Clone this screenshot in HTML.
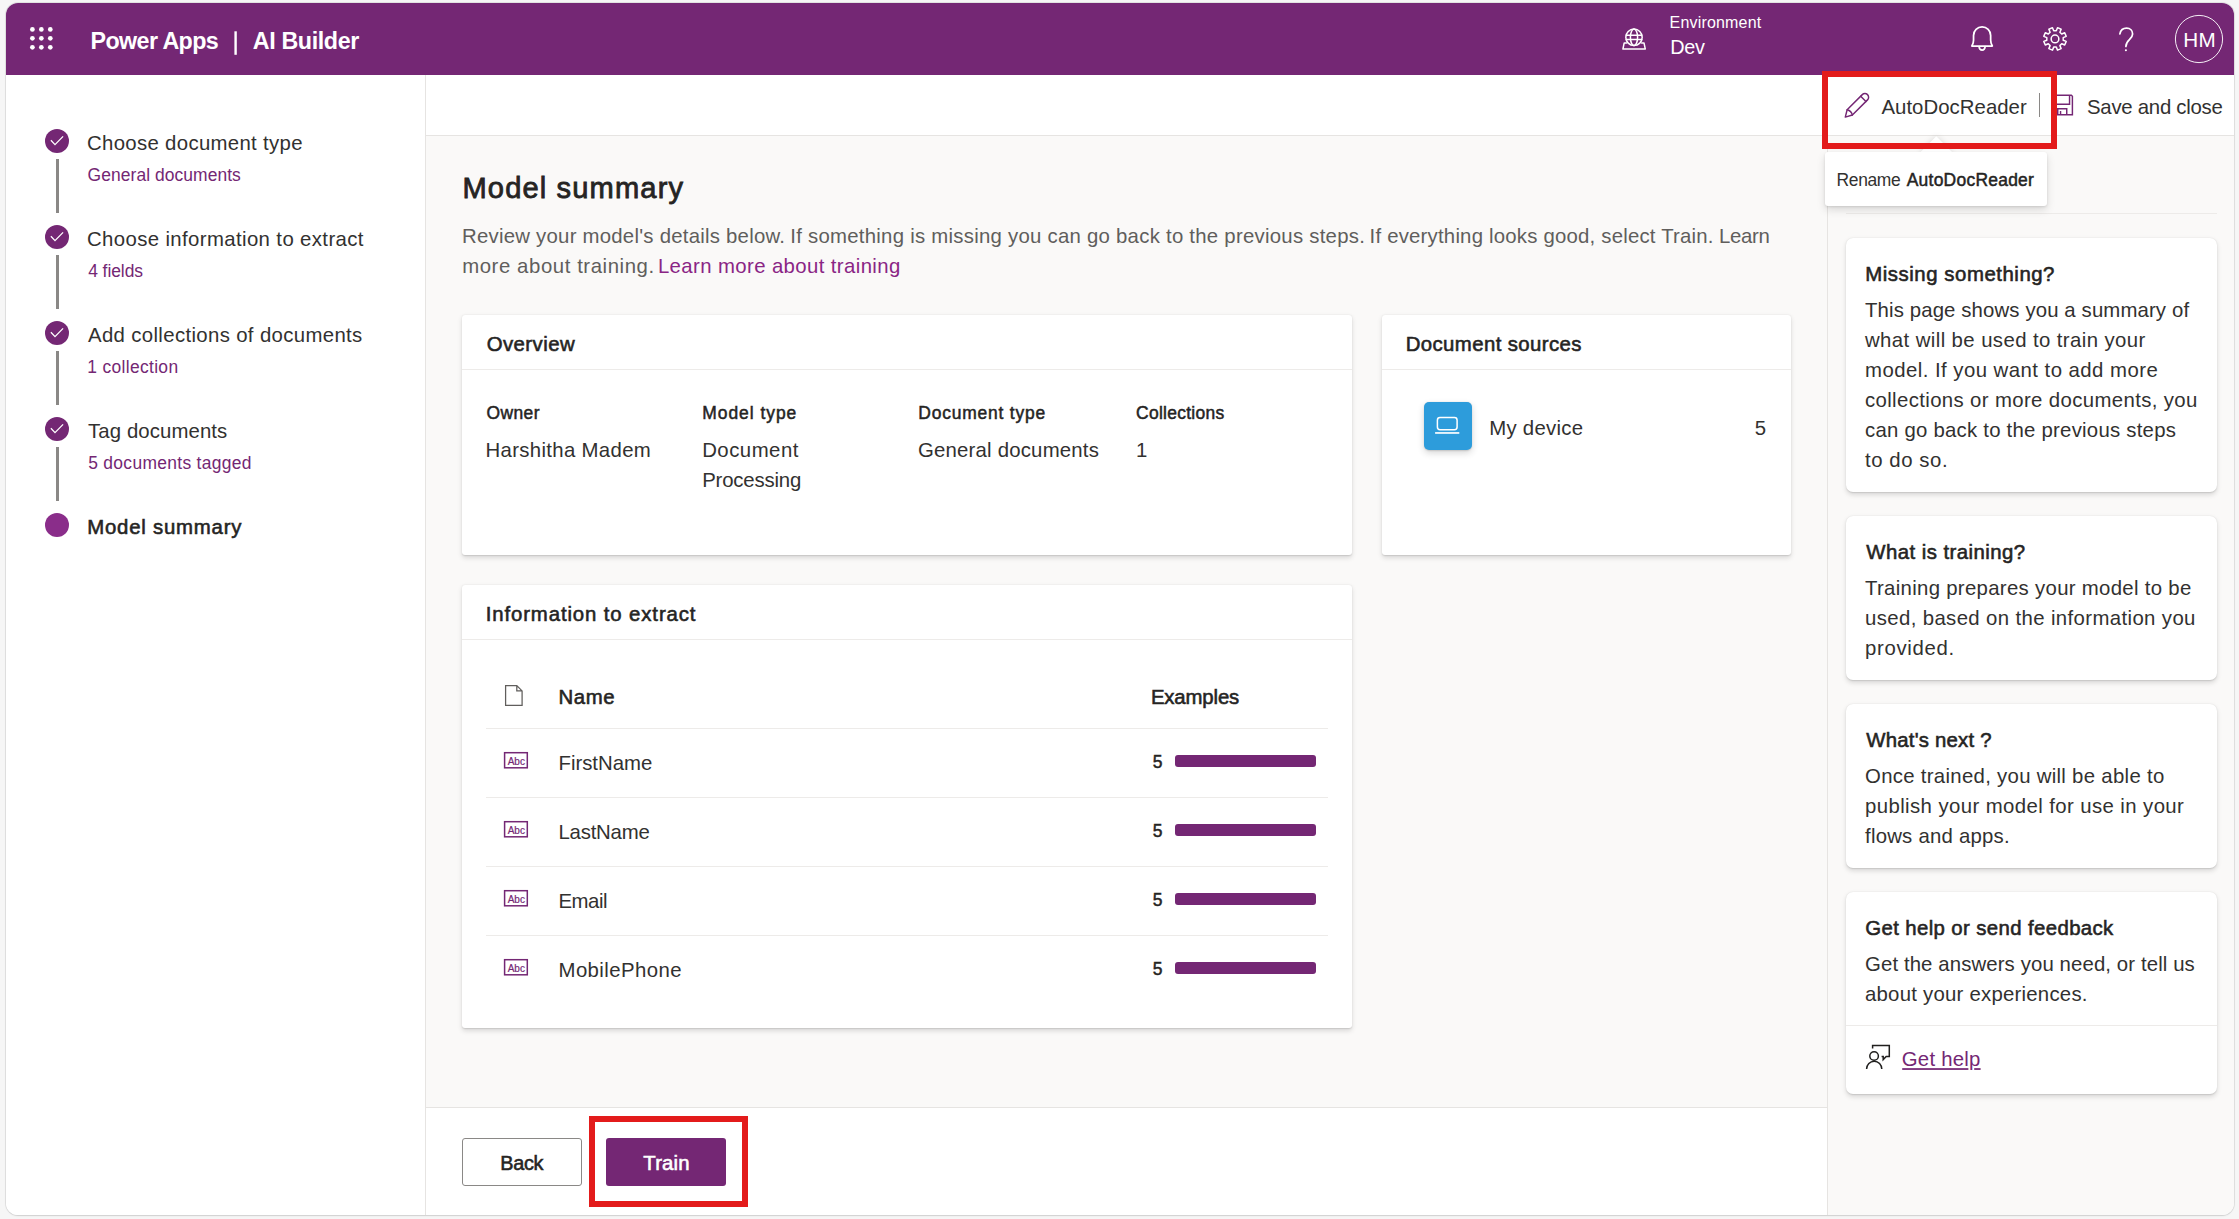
<!DOCTYPE html><html><head><meta charset="utf-8"><title>AI Builder</title>
<style>
html,body{margin:0;padding:0}
body{width:2239px;height:1219px;overflow:hidden;background:#f6f6f6;position:relative;font-family:"Liberation Sans",sans-serif}
.a{position:absolute;box-sizing:border-box}
.t{position:absolute;white-space:pre;line-height:30px;height:30px;font-family:"Liberation Sans",sans-serif;font-weight:400}
.ov{position:absolute;left:0;top:0;pointer-events:none;overflow:visible}
#frame{left:6px;top:3px;width:2228px;height:1212px;border-radius:12px;background:#fff;box-shadow:0 0 0 1px rgba(0,0,0,.075),0 1px 2px rgba(0,0,0,.09)}
#win{left:0;top:0;width:2239px;height:1219px;clip-path:inset(3px 5px 4px 6px round 12px)}
.card{background:#fff;border-radius:3px;box-shadow:0 2.4px 5.4px rgba(0,0,0,.13),0 .45px 1.35px rgba(0,0,0,.11)}
.rc{border-radius:7px}
.hl{background:#edebe9;height:1px}
.red{border:6px solid #e31b1b;z-index:50}
</style></head><body>
<div class="a" id="frame"></div>
<div class="a" id="win">
<div class="a" style="left:6px;top:3px;width:2228px;height:72px;background:#742774"></div>
<div class="a" style="left:6px;top:75px;width:420px;height:1140px;background:#fff;border-right:1px solid #e6e4e2"></div>
<div class="a" style="left:426px;top:75px;width:1808px;height:61px;background:#fff;border-bottom:1px solid #e6e4e2"></div>
<div class="a" style="left:426px;top:136px;width:1401px;height:971px;background:#faf9f8"></div>
<div class="a" style="left:1827px;top:136px;width:407px;height:1079px;background:#faf9f8;border-left:1px solid #e6e4e2"></div>
<div class="a" style="left:426px;top:1107px;width:1401px;height:108px;background:#fff;border-top:1px solid #e6e4e2"></div>
<div class="a hl" style="left:1846px;top:213px;width:371px"></div>
<div class="a card" style="left:462px;top:315px;width:890px;height:240px"></div>
<div class="a hl" style="left:462px;top:369px;width:890px"></div>
<div class="a card" style="left:1382px;top:315px;width:409px;height:240px"></div>
<div class="a hl" style="left:1382px;top:369px;width:409px"></div>
<div class="a card" style="left:462px;top:585px;width:890px;height:442.5px"></div>
<div class="a hl" style="left:462px;top:639px;width:890px"></div>
<div class="a hl" style="left:486px;top:728px;width:842px"></div>
<div class="a hl" style="left:486px;top:797px;width:842px"></div>
<div class="a hl" style="left:486px;top:866px;width:842px"></div>
<div class="a hl" style="left:486px;top:935px;width:842px"></div>
<div class="a card rc" style="left:1846px;top:238px;width:371px;height:253.5px"></div>
<div class="a card rc" style="left:1846px;top:516px;width:371px;height:164px"></div>
<div class="a card rc" style="left:1846px;top:704px;width:371px;height:164px"></div>
<div class="a card rc" style="left:1846px;top:892px;width:371px;height:202px"></div>
<div class="a hl" style="left:1846px;top:1025px;width:371px"></div>
<div class="a" style="left:1424px;top:402px;width:48px;height:48px;border-radius:5px;background:#2d9cdb;box-shadow:0 3px 7px rgba(0,0,0,.16),0 .5px 1.5px rgba(0,0,0,.12)"></div>
<div class="a" style="left:462px;top:1138px;width:120px;height:48px;border:1px solid #8a8886;border-radius:3px;background:#fff"></div>
<div class="a" style="left:606px;top:1138px;width:120px;height:48px;border-radius:3px;background:#742774"></div>
<div class="a" style="left:1925px;top:140.7px;width:22.6px;height:22.6px;background:#fff;transform:rotate(45deg);box-shadow:0 0 6px rgba(0,0,0,.13);z-index:20"></div>
<div class="a" style="left:1825px;top:152px;width:222px;height:54px;background:#fff;border-radius:3px;box-shadow:0 4px 9px rgba(0,0,0,.13),0 1px 2.5px rgba(0,0,0,.10);z-index:21"></div>
<div class="a" style="left:1918px;top:152px;width:37px;height:14px;background:#fff;z-index:22"></div>
<svg class="ov" width="2239" height="1219" viewBox="0 0 2239 1219" ><circle cx="32.4" cy="29.4" r="2.35" fill="#fff"/><circle cx="41.35" cy="29.4" r="2.35" fill="#fff"/><circle cx="50.3" cy="29.4" r="2.35" fill="#fff"/><circle cx="32.4" cy="38.35" r="2.35" fill="#fff"/><circle cx="41.35" cy="38.35" r="2.35" fill="#fff"/><circle cx="50.3" cy="38.35" r="2.35" fill="#fff"/><circle cx="32.4" cy="47.3" r="2.35" fill="#fff"/><circle cx="41.35" cy="47.3" r="2.35" fill="#fff"/><circle cx="50.3" cy="47.3" r="2.35" fill="#fff"/><rect x="234.4" y="31.3" width="2.4" height="23.5" fill="#fff"/><g fill="none" stroke="#fff" stroke-width="1.5" stroke-linejoin="round" stroke-linecap="round"><path d="M1626.6 42.9 H1624.2 L1622.9 49.1 H1645.3 L1644 42.9 H1641.6" /><circle cx="1634" cy="37.3" r="8.2"/><ellipse cx="1634" cy="37.3" rx="3.6" ry="8.2"/><path d="M1626.2 35.25 H1641.8 M1626.2 39.5 H1641.8"/></g><g fill="none" stroke="#fff" stroke-width="1.75" stroke-linejoin="round" stroke-linecap="round"><path d="M1971.9 46 C1972.6 44.6 1973.55 42.6 1973.55 40.2 V35.45 a8.55 8.55 0 0 1 17.1 0 V40.2 C1990.65 42.6 1991.6 44.6 1992.3 46 Z"/><path d="M1979.1 46.6 a3 3.5 0 0 0 6 0"/></g><g fill="none" stroke="#fff" stroke-width="1.5" stroke-linejoin="round" stroke-linecap="round"><path d="M2063.20 40.20 L2066.22 41.41 L2064.71 45.06 L2061.71 43.78 L2059.88 45.61 L2061.16 48.61 L2057.51 50.12 L2056.30 47.10 L2053.70 47.10 L2052.49 50.12 L2048.84 48.61 L2050.12 45.61 L2048.29 43.78 L2045.29 45.06 L2043.78 41.41 L2046.80 40.20 L2046.80 37.60 L2043.78 36.39 L2045.29 32.74 L2048.29 34.02 L2050.12 32.19 L2048.84 29.19 L2052.49 27.68 L2053.70 30.70 L2056.30 30.70 L2057.51 27.68 L2061.16 29.19 L2059.88 32.19 L2061.71 34.02 L2064.71 32.74 L2066.22 36.39 L2063.20 37.60 Z"/><circle cx="2055.0" cy="38.9" r="3.85"/></g><g fill="none" stroke="#fff" stroke-width="1.75" stroke-linejoin="round" stroke-linecap="round"><path d="M2119.9 33.9 C2120.6 30.3 2123.2 28.2 2126.6 28.2 C2130.2 28.2 2132.6 30.7 2132.6 34 C2132.6 39.6 2125.9 40 2125.9 46.4"/></g><circle cx="2125.9" cy="50.2" r="1.05" fill="#fff"/><circle cx="2199" cy="39" r="23.6" fill="none" stroke="#fff" stroke-opacity=".92" stroke-width="1"/><g fill="none" stroke="#742774" stroke-width="1.45" stroke-linejoin="round" stroke-linecap="round"><path d="M1845.30 117.10 L1847.13 109.78 L1862.28 94.63 A3.7 3.7 0 0 1 1867.52 99.87 L1852.37 115.02 Z"/><path d="M1847.13 109.78 Q1851.40 110.80 1852.37 115.02"/><path d="M1860.70 96.20 L1865.95 101.45"/></g><rect x="2039" y="93" width="1" height="24" fill="#8a8886"/><g fill="none" stroke="#742774" stroke-width="1.45" stroke-linejoin="miter"><path d="M2052.7 95.2 H2071.3 L2072.4 96.3 V114.8 H2052.7 Z"/><path d="M2052.7 104.15 H2069.55 V95.1"/><path d="M2057.75 114.8 V108.8 H2066.75 V114.8 M2060.55 114.8 V111"/></g><circle cx="57" cy="141" r="12" fill="#742774"/><path d="M50.9 140.3 L55 144.6 L63.1 136.4" fill="none" stroke="#fff" stroke-width="1.3"/><rect x="56" y="159" width="3" height="54" fill="#8a8886"/><circle cx="57" cy="237" r="12" fill="#742774"/><path d="M50.9 236.3 L55 240.6 L63.1 232.4" fill="none" stroke="#fff" stroke-width="1.3"/><rect x="56" y="255" width="3" height="54" fill="#8a8886"/><circle cx="57" cy="333" r="12" fill="#742774"/><path d="M50.9 332.3 L55 336.6 L63.1 328.4" fill="none" stroke="#fff" stroke-width="1.3"/><rect x="56" y="351" width="3" height="54" fill="#8a8886"/><circle cx="57" cy="429" r="12" fill="#742774"/><path d="M50.9 428.3 L55 432.6 L63.1 424.4" fill="none" stroke="#fff" stroke-width="1.3"/><rect x="56" y="447" width="3" height="54" fill="#8a8886"/><circle cx="57" cy="525" r="12" fill="#8a2d8a"/><rect x="1437.4" y="417.6" width="19.7" height="12.1" rx="2.6" fill="none" stroke="#fff" stroke-width="1.5"/><rect x="1435.1" y="432" width="24.2" height="1.9" fill="#fff" fill-opacity=".88"/><path d="M505.6 685.6 H516.8 L522.1 690.9 V705.3 H505.6 Z M516.8 685.6 V690.9 H522.1" fill="none" stroke="#605e5c" stroke-width="1.25" stroke-linejoin="miter"/><rect x="504.6" y="752.7" width="22.7" height="15.1" fill="none" stroke="#742774" stroke-width="1.5"/><rect x="1175" y="755" width="141" height="12" rx="3" fill="#742774"/><rect x="504.6" y="821.7" width="22.7" height="15.1" fill="none" stroke="#742774" stroke-width="1.5"/><rect x="1175" y="824" width="141" height="12" rx="3" fill="#742774"/><rect x="504.6" y="890.7" width="22.7" height="15.1" fill="none" stroke="#742774" stroke-width="1.5"/><rect x="1175" y="893" width="141" height="12" rx="3" fill="#742774"/><rect x="504.6" y="959.7" width="22.7" height="15.1" fill="none" stroke="#742774" stroke-width="1.5"/><rect x="1175" y="962" width="141" height="12" rx="3" fill="#742774"/><g fill="none" stroke="#201f1e" stroke-width="1.5" stroke-linejoin="miter"><path d="M1872.6 1048.6 V1045.4 H1889.3 V1056.4 H1886.2 L1883.2 1059.6 V1056.4 H1881.6"/><circle cx="1874.1" cy="1056" r="4.3"/><path d="M1866.6 1069 a7.6 7.9 0 0 1 15.2 0"/></g><rect x="1902.2" y="1068.15" width="66.2" height="1.75" fill="#742774"/><rect x="1974.2" y="1068.15" width="6.4" height="1.75" fill="#742774"/></svg>
<span class="t" style="left:90.60px;top:26.00px;font-size:23.28px;color:#ffffff;letter-spacing:-0.601px;font-weight:700;">Power Apps</span>
<span class="t" style="left:252.80px;top:26.00px;font-size:23.28px;color:#ffffff;letter-spacing:-0.380px;font-weight:700;">AI Builder</span>
<span class="t" style="left:1669.60px;top:8.00px;font-size:16.0px;color:#ffffff;letter-spacing:0.173px;">Environment</span>
<span class="t" style="left:1670.30px;top:32.00px;font-size:19.88px;color:#ffffff;letter-spacing:-0.343px;">Dev</span>
<span class="t" style="left:2183.20px;top:25.00px;font-size:20.67px;color:#ffffff;letter-spacing:0.283px;">HM</span>
<span class="t" style="left:1881.40px;top:92.00px;font-size:20.37px;color:#323130;letter-spacing:0.043px;">AutoDocReader</span>
<span class="t" style="left:2087.00px;top:92.00px;font-size:20.37px;color:#323130;letter-spacing:-0.261px;">Save and close</span>
<span class="t" style="left:1836.60px;top:165.00px;font-size:17.46px;color:#323130;letter-spacing:-0.362px;z-index:30;">Rename</span>
<span class="t" style="left:1906.74px;top:165.00px;font-size:17.46px;color:#252423;letter-spacing:0.254px;-webkit-text-stroke:0.49px #252423;z-index:30;">AutoDocReader</span>
<span class="t" style="left:87.00px;top:128.00px;font-size:20.37px;color:#323130;letter-spacing:0.323px;">Choose document type</span>
<span class="t" style="left:87.60px;top:160.00px;font-size:17.46px;color:#742774;letter-spacing:0.065px;">General documents</span>
<span class="t" style="left:87.00px;top:224.00px;font-size:20.37px;color:#323130;letter-spacing:0.376px;">Choose information to extract</span>
<span class="t" style="left:88.20px;top:256.00px;font-size:17.46px;color:#742774;letter-spacing:-0.062px;">4 fields</span>
<span class="t" style="left:88.00px;top:320.00px;font-size:20.37px;color:#323130;letter-spacing:0.350px;">Add collections of documents</span>
<span class="t" style="left:87.20px;top:352.00px;font-size:17.46px;color:#742774;letter-spacing:0.333px;">1 collection</span>
<span class="t" style="left:88.00px;top:416.00px;font-size:20.37px;color:#323130;letter-spacing:0.101px;">Tag documents</span>
<span class="t" style="left:88.20px;top:448.00px;font-size:17.46px;color:#742774;letter-spacing:0.311px;">5 documents tagged</span>
<span class="t" style="left:87.19px;top:512.00px;font-size:20.37px;color:#252423;letter-spacing:0.783px;-webkit-text-stroke:0.57px #252423;">Model summary</span>
<span class="t" style="left:462.50px;top:173.00px;font-size:29.1px;color:#252423;letter-spacing:1.133px;-webkit-text-stroke:0.81px #252423;">Model summary</span>
<span class="t" style="left:462.00px;top:221.00px;font-size:20.37px;color:#605e5c;letter-spacing:0.239px;">Review your model&#x27;s details below.</span>
<span class="t" style="left:790.30px;top:221.00px;font-size:20.37px;color:#605e5c;letter-spacing:0.254px;">If something is missing you can go back to the previous steps.</span>
<span class="t" style="left:1369.60px;top:221.00px;font-size:20.37px;color:#605e5c;letter-spacing:0.205px;">If everything looks good, select Train.</span>
<span class="t" style="left:1718.90px;top:221.00px;font-size:20.37px;color:#605e5c;letter-spacing:-0.262px;">Learn</span>
<span class="t" style="left:462.20px;top:251.00px;font-size:20.37px;color:#605e5c;letter-spacing:0.573px;">more about training.</span>
<span class="t" style="left:657.90px;top:251.00px;font-size:20.37px;color:#8a2585;letter-spacing:0.386px;">Learn more about training</span>
<span class="t" style="left:486.69px;top:329.00px;font-size:20.37px;color:#252423;letter-spacing:0.441px;-webkit-text-stroke:0.57px #252423;">Overview</span>
<span class="t" style="left:1405.69px;top:329.00px;font-size:20.37px;color:#252423;letter-spacing:0.405px;-webkit-text-stroke:0.57px #252423;">Document sources</span>
<span class="t" style="left:485.69px;top:599.00px;font-size:20.37px;color:#252423;letter-spacing:0.883px;-webkit-text-stroke:0.57px #252423;">Information to extract</span>
<span class="t" style="left:486.44px;top:398.00px;font-size:17.46px;color:#252423;letter-spacing:0.439px;-webkit-text-stroke:0.49px #252423;">Owner</span>
<span class="t" style="left:702.25px;top:398.00px;font-size:17.46px;color:#252423;letter-spacing:0.968px;-webkit-text-stroke:0.49px #252423;">Model type</span>
<span class="t" style="left:918.25px;top:398.00px;font-size:17.46px;color:#252423;letter-spacing:0.811px;-webkit-text-stroke:0.49px #252423;">Document type</span>
<span class="t" style="left:1136.04px;top:398.00px;font-size:17.46px;color:#252423;letter-spacing:0.284px;-webkit-text-stroke:0.49px #252423;">Collections</span>
<span class="t" style="left:485.60px;top:435.00px;font-size:20.37px;color:#323130;letter-spacing:0.320px;">Harshitha Madem</span>
<span class="t" style="left:702.20px;top:435.00px;font-size:20.37px;color:#323130;letter-spacing:0.481px;">Document</span>
<span class="t" style="left:702.20px;top:465.00px;font-size:20.37px;color:#323130;letter-spacing:-0.188px;">Processing</span>
<span class="t" style="left:918.00px;top:435.00px;font-size:20.37px;color:#323130;letter-spacing:0.200px;">General documents</span>
<span class="t" style="left:1136.00px;top:435.00px;font-size:20.37px;color:#323130;">1</span>
<span class="t" style="left:1489.20px;top:413.00px;font-size:20.37px;color:#323130;letter-spacing:0.284px;">My device</span>
<span class="t" style="left:1754.80px;top:413.00px;font-size:20.37px;color:#323130;">5</span>
<span class="t" style="left:558.49px;top:682.00px;font-size:20.37px;color:#252423;letter-spacing:0.615px;-webkit-text-stroke:0.57px #252423;">Name</span>
<span class="t" style="left:1150.88px;top:682.00px;font-size:20.37px;color:#252423;letter-spacing:-0.140px;-webkit-text-stroke:0.57px #252423;">Examples</span>
<span class="t" style="left:558.50px;top:748.00px;font-size:20.37px;color:#323130;letter-spacing:-0.020px;">FirstName</span>
<span class="t" style="left:1152.64px;top:747.00px;font-size:17.46px;color:#252423;-webkit-text-stroke:0.49px #252423;">5</span>
<span class="t" style="left:507.70px;top:747.00px;font-size:9.99px;color:#742774;letter-spacing:-0.006px;-webkit-text-stroke:0.2px #742774;">Abc</span>
<span class="t" style="left:558.50px;top:817.00px;font-size:20.37px;color:#323130;letter-spacing:-0.224px;">LastName</span>
<span class="t" style="left:1152.64px;top:816.00px;font-size:17.46px;color:#252423;-webkit-text-stroke:0.49px #252423;">5</span>
<span class="t" style="left:507.70px;top:816.00px;font-size:9.99px;color:#742774;letter-spacing:-0.006px;-webkit-text-stroke:0.2px #742774;">Abc</span>
<span class="t" style="left:558.50px;top:886.00px;font-size:20.37px;color:#323130;letter-spacing:-0.471px;">Email</span>
<span class="t" style="left:1152.64px;top:885.00px;font-size:17.46px;color:#252423;-webkit-text-stroke:0.49px #252423;">5</span>
<span class="t" style="left:507.70px;top:885.00px;font-size:9.99px;color:#742774;letter-spacing:-0.006px;-webkit-text-stroke:0.2px #742774;">Abc</span>
<span class="t" style="left:558.50px;top:955.00px;font-size:20.37px;color:#323130;letter-spacing:0.418px;">MobilePhone</span>
<span class="t" style="left:1152.64px;top:954.00px;font-size:17.46px;color:#252423;-webkit-text-stroke:0.49px #252423;">5</span>
<span class="t" style="left:507.70px;top:954.00px;font-size:9.99px;color:#742774;letter-spacing:-0.006px;-webkit-text-stroke:0.2px #742774;">Abc</span>
<span class="t" style="left:500.28px;top:1148.00px;font-size:19.84px;color:#252423;letter-spacing:-0.276px;-webkit-text-stroke:0.56px #252423;">Back</span>
<span class="t" style="left:643.28px;top:1148.00px;font-size:20.37px;color:#ffffff;letter-spacing:0.181px;-webkit-text-stroke:0.57px #ffffff;">Train</span>
<span class="t" style="left:1865.29px;top:259.00px;font-size:20.37px;color:#252423;letter-spacing:0.543px;-webkit-text-stroke:0.57px #252423;">Missing something?</span>
<span class="t" style="left:1865.00px;top:295.00px;font-size:20.37px;color:#323130;letter-spacing:0.123px;">This page shows you a summary of</span>
<span class="t" style="left:1865.00px;top:325.00px;font-size:20.37px;color:#323130;letter-spacing:0.403px;">what will be used to train your</span>
<span class="t" style="left:1865.00px;top:355.00px;font-size:20.37px;color:#323130;letter-spacing:0.455px;">model. If you want to add more</span>
<span class="t" style="left:1865.00px;top:385.00px;font-size:20.37px;color:#323130;letter-spacing:0.366px;">collections or more documents, you</span>
<span class="t" style="left:1865.00px;top:415.00px;font-size:20.37px;color:#323130;letter-spacing:0.236px;">can go back to the previous steps</span>
<span class="t" style="left:1865.00px;top:445.00px;font-size:20.37px;color:#323130;letter-spacing:0.570px;">to do so.</span>
<span class="t" style="left:1866.29px;top:537.00px;font-size:20.37px;color:#252423;letter-spacing:0.451px;-webkit-text-stroke:0.57px #252423;">What is training?</span>
<span class="t" style="left:1865.00px;top:573.00px;font-size:20.37px;color:#323130;letter-spacing:0.309px;">Training prepares your model to be</span>
<span class="t" style="left:1865.00px;top:603.00px;font-size:20.37px;color:#323130;letter-spacing:0.375px;">used, based on the information you</span>
<span class="t" style="left:1865.00px;top:633.00px;font-size:20.37px;color:#323130;letter-spacing:0.675px;">provided.</span>
<span class="t" style="left:1866.29px;top:725.00px;font-size:20.37px;color:#252423;letter-spacing:0.212px;-webkit-text-stroke:0.57px #252423;">What&#x27;s next ?</span>
<span class="t" style="left:1865.00px;top:761.00px;font-size:20.37px;color:#323130;letter-spacing:0.297px;">Once trained, you will be able to</span>
<span class="t" style="left:1865.00px;top:791.00px;font-size:20.37px;color:#323130;letter-spacing:0.404px;">publish your model for use in your</span>
<span class="t" style="left:1865.00px;top:821.00px;font-size:20.37px;color:#323130;letter-spacing:0.227px;">flows and apps.</span>
<span class="t" style="left:1865.29px;top:913.00px;font-size:20.37px;color:#252423;letter-spacing:0.383px;-webkit-text-stroke:0.57px #252423;">Get help or send feedback</span>
<span class="t" style="left:1865.00px;top:949.00px;font-size:20.37px;color:#323130;letter-spacing:0.110px;">Get the answers you need, or tell us</span>
<span class="t" style="left:1865.00px;top:979.00px;font-size:20.37px;color:#323130;letter-spacing:0.234px;">about your experiences.</span>
<span class="t" style="left:1901.80px;top:1044.00px;font-size:20.37px;color:#742774;letter-spacing:0.237px;">Get help</span>
<div class="a red" style="left:1822px;top:71px;width:235px;height:78px"></div>
<div class="a red" style="left:588.5px;top:1116px;width:159.5px;height:91px"></div>
</div></body></html>
